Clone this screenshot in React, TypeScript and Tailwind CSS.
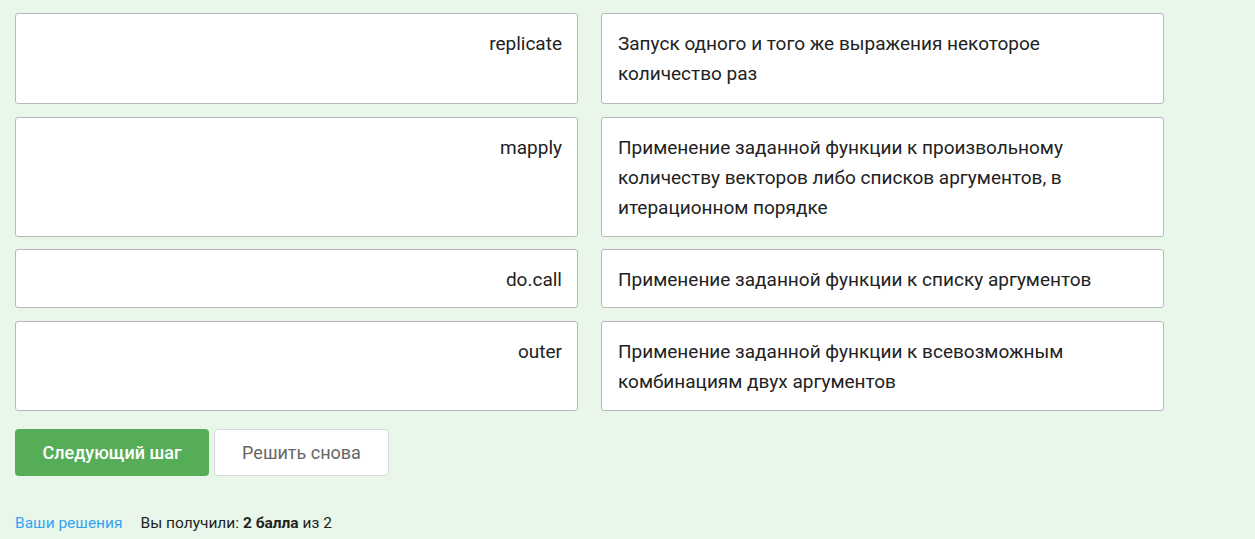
const rows = [
  {
    key: "replicate",
    value: "Запуск одного и того же выражения некоторое количество раз",
    h: "h-[91px]",
  },
  {
    key: "mapply",
    value:
      "Применение заданной функции к произвольному количеству векторов либо списков аргументов, в итерационном порядке",
    h: "h-[120px]",
  },
  {
    key: "do.call",
    value: "Применение заданной функции к списку аргументов",
    h: "h-[59px]",
  },
  {
    key: "outer",
    value: "Применение заданной функции к всевозможным комбинациям двух аргументов",
    h: "h-[90px]",
  },
];

export default function App() {
  return (
    <div className="min-h-[539px] w-full bg-[#e8f7e9] font-['Roboto',sans-serif] text-[#222] pl-[15px] pt-[13px]">
      <div className="flex flex-col gap-[12.5px] w-[1149px]">
        {rows.map(({ key, value, h }) => (
          <div key={key} className={`flex gap-[23px] ${h}`}>
            <div className="w-[563px] bg-white border border-[#b8b8b8] rounded-[3px] px-[15px] pt-[15px] pb-[13px] text-right text-[19px] leading-[30px]">
              {key}
            </div>
            <div className="w-[563px] bg-white border border-[#b8b8b8] rounded-[3px] pl-4 pr-[30px] pt-[15px] pb-[13px] text-[19px] leading-[30px]">
              {value}
            </div>
          </div>
        ))}
      </div>

      <div className="flex gap-[5px] mt-[18px]">
        <button className="w-[194px] h-[47px] rounded-[4px] bg-[#55ad57] text-white text-[18px] font-medium">
          Следующий шаг
        </button>
        <button className="w-[175px] h-[47px] rounded-[4px] bg-white border border-[#d8d8d8] text-[#666] text-[18px]">
          Решить снова
        </button>
      </div>

      <div className="flex items-center mt-[37px] text-[15.5px] leading-[20px]">
        <a className="text-[#35a3f5] cursor-pointer">Ваши решения</a>
        <span className="ml-[18px] text-[#222]">
          Вы получили: <strong className="font-bold">2 балла</strong> из 2
        </span>
      </div>
    </div>
  );
}
